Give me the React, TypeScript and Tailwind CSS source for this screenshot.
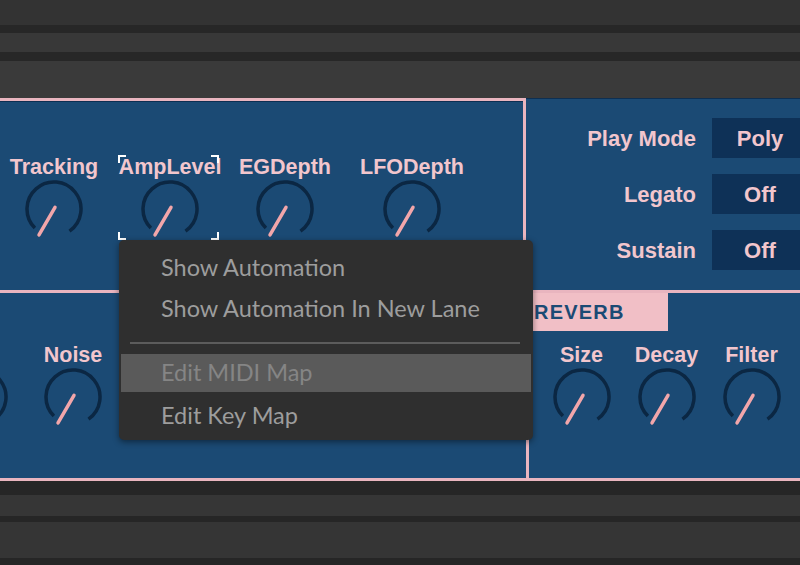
import React from "react";

// Rotary knob: dark arc with a salmon pointer parked near the minimum
function Knob() {
  const cx = 30, cy = 30, r = 27;
  const pt = (deg: number, rad: number) => {
    const a = (deg * Math.PI) / 180;
    return [cx + rad * Math.sin(a), cy - rad * Math.cos(a)];
  };
  const [ax, ay] = pt(-135, r);
  const [bx, by] = pt(145, r);
  const [p1x, p1y] = pt(30, 2);
  const [p2x, p2y] = pt(-150, 30);
  return (
    <svg width="60" height="60" viewBox="0 0 60 60" className="block">
      <path d={`M ${ax} ${ay} A ${r} ${r} 0 1 1 ${bx} ${by}`} fill="none" stroke="#0b2743" strokeWidth="3.5" />
      <line x1={p1x} y1={p1y} x2={p2x} y2={p2y} stroke="#f2a6aa" strokeWidth="3.5" strokeLinecap="round" />
    </svg>
  );
}

function KnobCell({ label, width }: { label?: string; width: string }) {
  return (
    <div className={`flex flex-col items-center shrink-0 ${width}`}>
      <div className="h-[24px] leading-[24px] text-[21.5px] font-bold text-[#f2c6cd] whitespace-nowrap">{label ?? "\u00a0"}</div>
      <Knob />
    </div>
  );
}

function Corner({ pos }: { pos: string }) {
  return <div className={`absolute w-[8px] h-[8px] border-white ${pos}`} />;
}

function ToggleRow({ label, value }: { label: string; value: string }) {
  return (
    <div className="flex items-center h-[40px]">
      <div className="w-[170px] shrink-0 text-right text-[22px] font-bold text-[#f2c6cd] whitespace-nowrap">{label}</div>
      <div className="ml-[16px] w-[96px] shrink-0 h-[40px] flex items-center justify-center bg-[#0e3157] text-[22px] font-bold text-[#f2c6cd]">
        {value}
      </div>
    </div>
  );
}

export default function App() {
  return (
    <div className="relative w-[800px] h-[565px] overflow-hidden bg-[#262626] font-['Liberation_Sans',Arial,sans-serif]">
      {/* arrangement lanes above the device */}
      <div className="h-[25px] bg-[#333333]" />
      <div className="h-[8px] bg-[#272727]" />
      <div className="h-[19px] bg-[#383838]" />
      <div className="h-[9px] bg-[#272727]" />
      <div className="h-[37px] bg-[#3a3a3a]" />

      {/* device panel */}
      <div className="grid grid-cols-[526px_274px] grid-rows-[192px_191px] bg-[#1b4a74]">
        {/* amp / modulation */}
        <div className="border-t-[3px] border-r-[3px] border-[#e9b5bf] pt-[54px] shadow-[inset_0_1px_0_#0d2f52]">
          <div className="flex">
            <KnobCell label="Tracking" width="w-[108px]" />
            <div className="relative w-[124px] shrink-0">
              <KnobCell label="AmpLevel" width="w-[124px]" />
              <div className="absolute top-0 left-[10px] w-[101px] h-[85px]">
                <Corner pos="top-0 left-0 border-t-2 border-l-2" />
                <Corner pos="top-0 right-0 border-t-2 border-r-2" />
                <Corner pos="bottom-0 left-0 border-b-2 border-l-2" />
                <Corner pos="bottom-0 right-0 border-b-2 border-r-2" />
              </div>
            </div>
            <KnobCell label="EGDepth" width="w-[106px]" />
            <KnobCell label="LFODepth" width="w-[148px]" />
          </div>
        </div>

        {/* play settings */}
        <div className="pt-[20px] flex flex-col gap-[16px] shadow-[inset_0_1px_0_#0d2f52]">
          <ToggleRow label="Play Mode" value="Poly" />
          <ToggleRow label="Legato" value="Off" />
          <ToggleRow label="Sustain" value="Off" />
        </div>

        {/* oscillator section */}
        <div className="border-t-[3px] border-b-[3px] border-[#e9b5bf] pt-[50px]">
          <div className="flex ml-[-68px]">
            <KnobCell width="w-[94px]" />
            <KnobCell label="Noise" width="w-[94px]" />
          </div>
        </div>

        {/* reverb */}
        <div className="border-t-[3px] border-l-[3px] border-b-[3px] border-[#e9b5bf]">
          <div className="w-[139px] h-[38px] bg-[#f1bfc6] pl-[5px] flex items-center text-[20px] font-bold tracking-[1.2px] text-[#1b4a74]">
            REVERB
          </div>
          <div className="flex pl-[10px] pt-[12px]">
            <KnobCell label="Size" width="w-[85px]" />
            <KnobCell label="Decay" width="w-[85px]" />
            <KnobCell label="Filter" width="w-[85px]" />
          </div>
        </div>
      </div>

      {/* lanes below */}
      <div className="h-[14px] bg-[#262626]" />
      <div className="h-[21px] bg-[#363636]" />
      <div className="h-[6px] bg-[#262626]" />
      <div className="h-[36px] bg-[#353535]" />

      {/* parameter context menu */}
      <div className="absolute left-[119px] top-[240px] w-[414px] h-[200px] rounded-[5px] bg-[#2f2f2f] pt-[7px] shadow-[0_2px_6px_rgba(0,0,0,0.45)] font-['Lato',sans-serif] text-[23.5px]">
        <div className="h-[41px] flex items-center pl-[42px] text-[#9d9d9d]">Show Automation</div>
        <div className="h-[41px] flex items-center pl-[42px] text-[#9d9d9d]">Show Automation In New Lane</div>
        <div className="h-[25px] pt-[13px] pl-[11px] pr-[13px]">
          <div className="h-[2px] bg-[#5c5c5c]" />
        </div>
        <div className="h-[38px] mx-[2px] flex items-center pl-[40px] bg-[#5a5a5a] text-[#858585]">Edit MIDI Map</div>
        <div className="h-[48px] flex items-center pl-[42px] pb-[1px] text-[#9d9d9d]">Edit Key Map</div>
      </div>
    </div>
  );
}
